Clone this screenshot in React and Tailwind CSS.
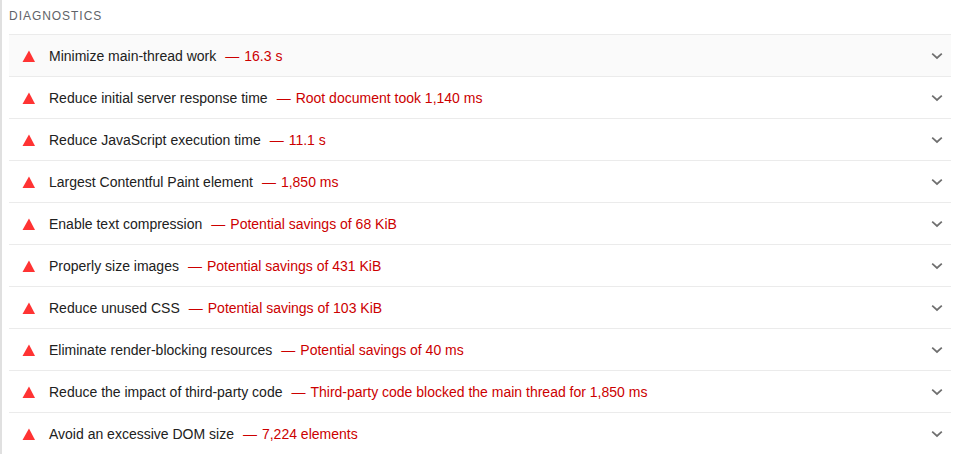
const rows = [
  ["Minimize main-thread work", "16.3 s", true],
  ["Reduce initial server response time", "Root document took 1,140 ms"],
  ["Reduce JavaScript execution time", "11.1 s"],
  ["Largest Contentful Paint element", "1,850 ms"],
  ["Enable text compression", "Potential savings of 68 KiB"],
  ["Properly size images", "Potential savings of 431 KiB"],
  ["Reduce unused CSS", "Potential savings of 103 KiB"],
  ["Eliminate render-blocking resources", "Potential savings of 40 ms"],
  ["Reduce the impact of third-party code", "Third-party code blocked the main thread for 1,850 ms"],
  ["Avoid an excessive DOM size", "7,224 elements"],
];

function Row({ title, value, hover }) {
  return (
    <div className={`flex items-center h-[42px] shrink-0 border-t border-[#ebebeb] text-[14px] leading-[20px] ${hover ? "bg-[#fafafa]" : ""}`}>
      <svg width="14" height="12" viewBox="0 0 14 12" className="ml-[13px] mr-[13px] shrink-0">
        <path d="M7 0.5 L13 12 L0.5 12 Z" fill="#ff3333" />
      </svg>
      <span className="text-[#212121]">{title}</span>
      <span className="ml-[9px] text-[#cc0000]">—</span>
      <span className="ml-[5px] text-[#cc0000]">{value}</span>
      <svg width="12" height="8" viewBox="0 0 12 8" className="ml-auto mr-[8px] shrink-0">
        <path d="M1.2 1.6 L6 6 L10.8 1.6" fill="none" stroke="#6f6f6f" strokeWidth="1.7" />
      </svg>
    </div>
  );
}

export default function App() {
  return (
    <div className="w-[957px] h-[454px] overflow-hidden bg-white border-l-2 border-[#e0e0e0] font-['Liberation_Sans',Arial,sans-serif]">
      <div className="pl-[7px] pr-[6px] flex flex-col">
        <div className="h-[34px] pt-[8px] text-[12px] leading-[16px] tracking-[0.96px] text-[#5f6368]">DIAGNOSTICS</div>
        {rows.map(([t, v, h]) => (
          <Row key={t} title={t} value={v} hover={h} />
        ))}
      </div>
    </div>
  );
}
